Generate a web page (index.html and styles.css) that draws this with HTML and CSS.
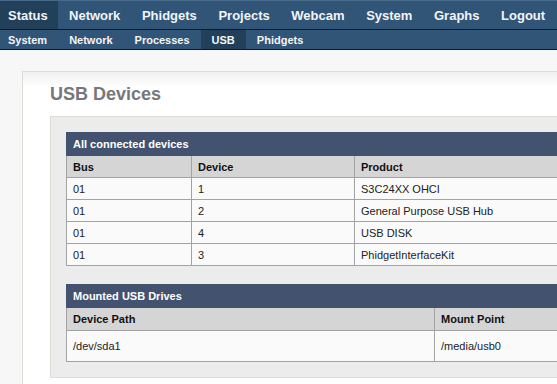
FILE: index.html
```html
<!DOCTYPE html>
<html lang="en">
<head>
    <meta charset="UTF-8">
    <meta name="viewport" content="width=device-width, initial-scale=1.0">
    <title>USB Devices</title>
    <link rel="stylesheet" href="styles.css">
</head>
<body>
    <div class="main-nav">
        <a class="nav-item active" href="#">Status</a>
        <a class="nav-item" href="#">Network</a>
        <a class="nav-item" href="#">Phidgets</a>
        <a class="nav-item" href="#">Projects</a>
        <a class="nav-item" href="#">Webcam</a>
        <a class="nav-item" href="#">System</a>
        <a class="nav-item" href="#">Graphs</a>
        <a class="nav-item" href="#">Logout</a>
    </div>
    <div class="sub-nav">
        <a class="sub-item" href="#">System</a>
        <a class="sub-item" href="#">Network</a>
        <a class="sub-item" href="#">Processes</a>
        <a class="sub-item active" href="#">USB</a>
        <a class="sub-item" href="#">Phidgets</a>
    </div>

    <div class="page">
        <div class="panel">
            <h2 class="panel-title">USB Devices</h2>

            <div class="inner-box">
                <table class="data-table">
                    <colgroup>
                        <col style="width: 125px">
                        <col style="width: 163px">
                        <col>
                    </colgroup>
                    <tr><th class="caption" colspan="3">All connected devices</th></tr>
                    <tr class="head-row"><th>Bus</th><th>Device</th><th>Product</th></tr>
                    <tr><td>01</td><td>1</td><td>S3C24XX OHCI</td></tr>
                    <tr><td>01</td><td>2</td><td>General Purpose USB Hub</td></tr>
                    <tr><td>01</td><td>4</td><td>USB DISK</td></tr>
                    <tr><td>01</td><td>3</td><td>PhidgetInterfaceKit</td></tr>
                </table>

                <table class="data-table drives">
                    <colgroup>
                        <col style="width: 368px">
                        <col>
                    </colgroup>
                    <tr><th class="caption" colspan="2">Mounted USB Drives</th></tr>
                    <tr class="head-row"><th>Device Path</th><th>Mount Point</th></tr>
                    <tr class="tall"><td>/dev/sda1</td><td>/media/usb0</td></tr>
                </table>
            </div>
        </div>
    </div>
</body>
</html>
```

FILE: styles.css
```css
body {
    margin: 0;
    padding: 0;
    background: #f7f7f7;
    font-family: 'Liberation Sans', Arial, sans-serif;
    overflow: hidden;
}
.main-nav {
    display: flex;
    height: 28px;
    background: #315577;
    border-top: 1px solid #47698a;
    border-bottom: 1px solid #0d1a26;
}
.nav-item {
    display: flex;
    align-items: center;
    padding: 0 10.8px;
    color: #f2f4f7;
    font-size: 13px;
    font-weight: 700;
    text-decoration: none;
}
.nav-item:first-child {
    padding-left: 8px;
    padding-right: 10.5px;
}
.nav-item.active {
    background: #22405a;
}
.sub-nav {
    display: flex;
    height: 19px;
    background: #315577;
    border-bottom: 1px solid #0d1a26;
}
.sub-item {
    display: flex;
    align-items: center;
    padding: 0 11px;
    color: #f2f4f7;
    font-size: 11px;
    font-weight: 700;
    text-decoration: none;
}
.sub-item:first-child {
    padding-left: 8px;
}
.sub-item.active {
    background: #22405a;
}
.page {
    padding: 21px 0 0 22px;
}
.panel {
    width: 760px;
    min-height: 340px;
    background: linear-gradient(#f1f1f1, #ffffff 16px);
    border-top: 1px solid #dcdcd4;
    border-left: 1px solid #dcdcd4;
    padding: 12px 0 0 27px;
}
.panel-title {
    margin: 0 0 11px;
    font-size: 18px;
    line-height: 21px;
    font-weight: 700;
    color: #777779;
}
.inner-box {
    background: #ececec;
    border: 1px solid #dcdcd4;
    padding: 15px;
}
.data-table {
    width: 640px;
    table-layout: fixed;
    border-collapse: collapse;
    font-size: 11px;
    color: #222;
}
.data-table + .data-table {
    margin-top: 18px;
}
.data-table th,
.data-table td {
    height: 21px;
    padding: 0 6px;
    text-align: left;
    border: 1px solid #a3a3a3;
}
.data-table td {
    background: #fafafa;
}
.data-table .caption {
    height: 22px;
    background: #43526f;
    border-color: #43526f;
    color: #fff;
}
.head-row th {
    background: #d5d5d5;
    color: #111;
}
.drives .head-row th {
    height: 22px;
}
.tall td {
    height: 30px;
}
```
